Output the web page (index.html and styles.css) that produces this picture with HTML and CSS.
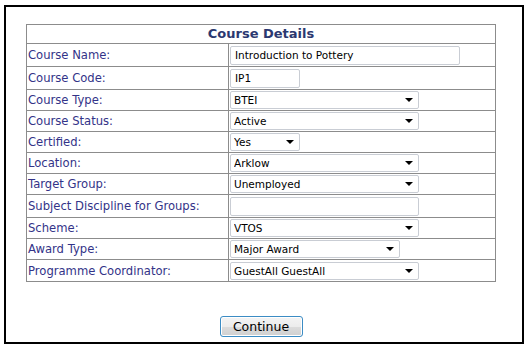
FILE: index.html
```html
<!DOCTYPE html>
<html lang="en">
<head>
    <meta charset="UTF-8">
    <title>Course Details</title>
    <link rel="stylesheet" href="styles.css">
</head>
<body>
    <div class="panel">
        <table class="details">
            <tr>
                <th colspan="2">Course Details</th>
            </tr>
            <tr class="text-row">
                <td class="label">Course Name:</td>
                <td><input type="text" class="field wide" value="Introduction to Pottery"></td>
            </tr>
            <tr class="text-row">
                <td class="label">Course Code:</td>
                <td><input type="text" class="field short" value="IP1"></td>
            </tr>
            <tr>
                <td class="label">Course Type:</td>
                <td><span class="drop"><select class="choice std"><option>BTEI</option></select></span></td>
            </tr>
            <tr>
                <td class="label">Course Status:</td>
                <td><span class="drop"><select class="choice std"><option>Active</option></select></span></td>
            </tr>
            <tr>
                <td class="label">Certified:</td>
                <td><span class="drop"><select class="choice short"><option>Yes</option><option>No</option></select></span></td>
            </tr>
            <tr>
                <td class="label">Location:</td>
                <td><span class="drop"><select class="choice std"><option>Arklow</option></select></span></td>
            </tr>
            <tr>
                <td class="label">Target Group:</td>
                <td><span class="drop"><select class="choice std"><option>Unemployed</option></select></span></td>
            </tr>
            <tr class="text-row">
                <td class="label">Subject Discipline for Groups:</td>
                <td><input type="text" class="field std" value=""></td>
            </tr>
            <tr>
                <td class="label">Scheme:</td>
                <td><span class="drop"><select class="choice std"><option>VTOS</option></select></span></td>
            </tr>
            <tr>
                <td class="label">Award Type:</td>
                <td><span class="drop"><select class="choice mid"><option>Major Award</option></select></span></td>
            </tr>
            <tr class="last-row">
                <td class="label">Programme Coordinator:</td>
                <td><span class="drop"><select class="choice std"><option>GuestAll GuestAll</option></select></span></td>
            </tr>
        </table>

        <div class="actions">
            <button type="button" class="continue-btn">Continue</button>
        </div>
    </div>
</body>
</html>
```

FILE: styles.css
```css
:root {
    --frame: #000000;
    --grid: #8c8c8c;
    --label: #333388;
    --heading: #2b3870;
    --control-border: #c9cdd4;
}

body {
    margin: 0;
    font-family: 'DejaVu Sans', Verdana, sans-serif;
    background: #ffffff;
}

.panel {
    box-sizing: border-box;
    width: 520px;
    height: 339px;
    margin: 5px 0 0 4px;
    border: 2px solid var(--frame);
}

.details {
    width: 470px;
    margin: 17px 0 0 20px;
    border-collapse: collapse;
}

.details th,
.details td {
    border: 1px solid var(--grid);
    padding: 0 1px;
}

.details th {
    height: 18px;
    font-size: 13px;
    line-height: 16px;
    font-weight: bold;
    color: var(--heading);
    text-align: center;
}

.details td {
    height: 20px;
    vertical-align: middle;
    font-size: 0;
}

.details .text-row td {
    height: 22px;
}

.details .last-row td {
    height: 21px;
}

.details td.label {
    width: 199px;
    font-size: 11.6px;
    line-height: 14px;
    color: var(--label);
}

.field,
.choice {
    box-sizing: border-box;
    margin: 0;
    font-family: 'DejaVu Sans', Tahoma, sans-serif;
    font-size: 10.5px;
    color: #000;
    background: #fff;
    border: 1px solid var(--control-border);
    border-radius: 2px;
    vertical-align: middle;
}

.field {
    height: 19px;
    padding: 0 4px;
}

.choice {
    height: 18px;
    padding: 0 14px 0 3px;
    appearance: none;
    -webkit-appearance: none;
}

.wide { width: 230px; }
.std { width: 189px; }
.mid { width: 170px; }
.short { width: 70px; }

.drop {
    position: relative;
    display: inline-block;
    vertical-align: middle;
}

.drop::after {
    content: "";
    position: absolute;
    right: 6px;
    top: 7px;
    border-left: 4px solid transparent;
    border-right: 4px solid transparent;
    border-top: 4px solid #000;
    pointer-events: none;
}

.actions {
    width: 470px;
    margin: 34px 0 0 20px;
    text-align: center;
}

.continue-btn {
    width: 83px;
    height: 21px;
    padding: 0;
    font-family: 'DejaVu Sans', Tahoma, sans-serif;
    font-size: 12.5px;
    color: #000;
    border: 1px solid #3c8cc4;
    border-radius: 3px;
    background: linear-gradient(#f4f4f4 0%, #ececec 50%, #dcdcdc 51%, #d0d0d0 100%);
    box-shadow: inset 0 0 0 1px #ffffff;
}
```
